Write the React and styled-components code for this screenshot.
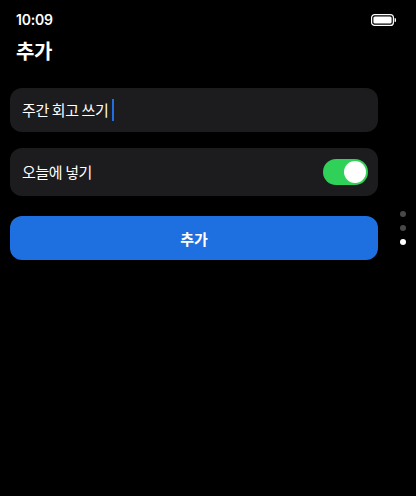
import React, { useState } from 'react';
import styled, { createGlobalStyle } from 'styled-components';

const GlobalStyle = createGlobalStyle`
  * { margin: 0; padding: 0; box-sizing: border-box; }
  html, body {
    width: 100%;
    height: 100%;
    background: #000;
    overflow: hidden;
  }
  #root { width: 100%; height: 100%; }
`;

const font = `"Noto Sans CJK KR", "Noto Sans", Inter, sans-serif`;

const Screen = styled.div`
  position: relative;
  width: 416px;
  height: 496px;
  background: #000;
  color: #fff;
  font-family: ${font};
`;

const StatusBar = styled.div`
  height: 40px;
  padding: 11px 20px 0 16px;
  display: flex;
  justify-content: space-between;
  align-items: flex-start;
`;

const Time = styled.span`
  font-family: Inter, "Noto Sans", sans-serif;
  font-size: 14px;
  font-weight: 600;
  line-height: 18px;
  letter-spacing: -0.2px;
`;

const Title = styled.h1`
  padding: 0 16px;
  font-size: 20px;
  font-weight: 700;
  line-height: 22px;
  letter-spacing: -0.3px;
`;

const Form = styled.div`
  margin-top: 26px;
  padding: 0 38px 0 10px;
  display: flex;
  flex-direction: column;
`;

const Card = styled.div`
  height: ${p => p.$h}px;
  margin-bottom: ${p => p.$mb || 0}px;
  padding: 0 10px 0 12px;
  border-radius: 12px;
  background: #1c1c1e;
  display: flex;
  align-items: center;
  justify-content: space-between;
`;

const Field = styled.div`
  display: flex;
  align-items: center;
  font-size: 15px;
  line-height: 20px;
  letter-spacing: -0.4px;
`;

const Caret = styled.span`
  display: inline-block;
  width: 2px;
  height: 22px;
  margin-left: 4px;
  background: #1f6fe1;
`;

const Label = styled.span`
  font-size: 15px;
  line-height: 20px;
  letter-spacing: -0.4px;
`;

const Toggle = styled.button`
  width: 45px;
  height: 26px;
  border: none;
  border-radius: 13px;
  background: ${p => (p.$on ? '#30d158' : '#39393d')};
  padding: 2px;
  display: flex;
  justify-content: ${p => (p.$on ? 'flex-end' : 'flex-start')};
  cursor: pointer;
`;

const Knob = styled.span`
  width: 22px;
  height: 22px;
  border-radius: 50%;
  background: #fff;
`;

const AddButton = styled.button`
  height: 44px;
  border: none;
  border-radius: 12px;
  background: #1e6fe0;
  color: #fff;
  font-family: ${font};
  font-size: 15px;
  font-weight: 700;
  cursor: pointer;
`;

const Pager = styled.div`
  position: absolute;
  left: 400px;
  top: 211px;
  display: flex;
  flex-direction: column;
  gap: 8px;
`;

const Dot = styled.span`
  width: 6px;
  height: 6px;
  border-radius: 50%;
  background: ${p => (p.$active ? '#fff' : '#48484a')};
`;

function Battery() {
  return (
    <svg width="25" height="12" viewBox="0 0 25 12" style={{ marginTop: 3 }}>
      <rect x="0.6" y="0.6" width="21.8" height="10.8" rx="3" fill="none" stroke="#fff" strokeWidth="1.2" />
      <rect x="2.4" y="2.4" width="18.2" height="7.2" rx="1.5" fill="#fff" />
      <path d="M23.6 4 a1.6 2 0 0 1 0 4 z" fill="#fff" />
    </svg>
  );
}

export default function App() {
  const [today, setToday] = useState(true);

  return (
    <>
      <GlobalStyle />
      <Screen>
        <StatusBar>
          <Time>10:09</Time>
          <Battery />
        </StatusBar>
        <Title>추가</Title>

        <Form>
          <Card $h={44} $mb={16}>
            <Field>
              주간 회고 쓰기
              <Caret />
            </Field>
          </Card>
          <Card $h={48} $mb={20}>
            <Label>오늘에 넣기</Label>
            <Toggle $on={today} onClick={() => setToday(!today)}>
              <Knob />
            </Toggle>
          </Card>
          <AddButton>추가</AddButton>
        </Form>

        <Pager>
          <Dot />
          <Dot />
          <Dot $active />
        </Pager>
      </Screen>
    </>
  );
}
